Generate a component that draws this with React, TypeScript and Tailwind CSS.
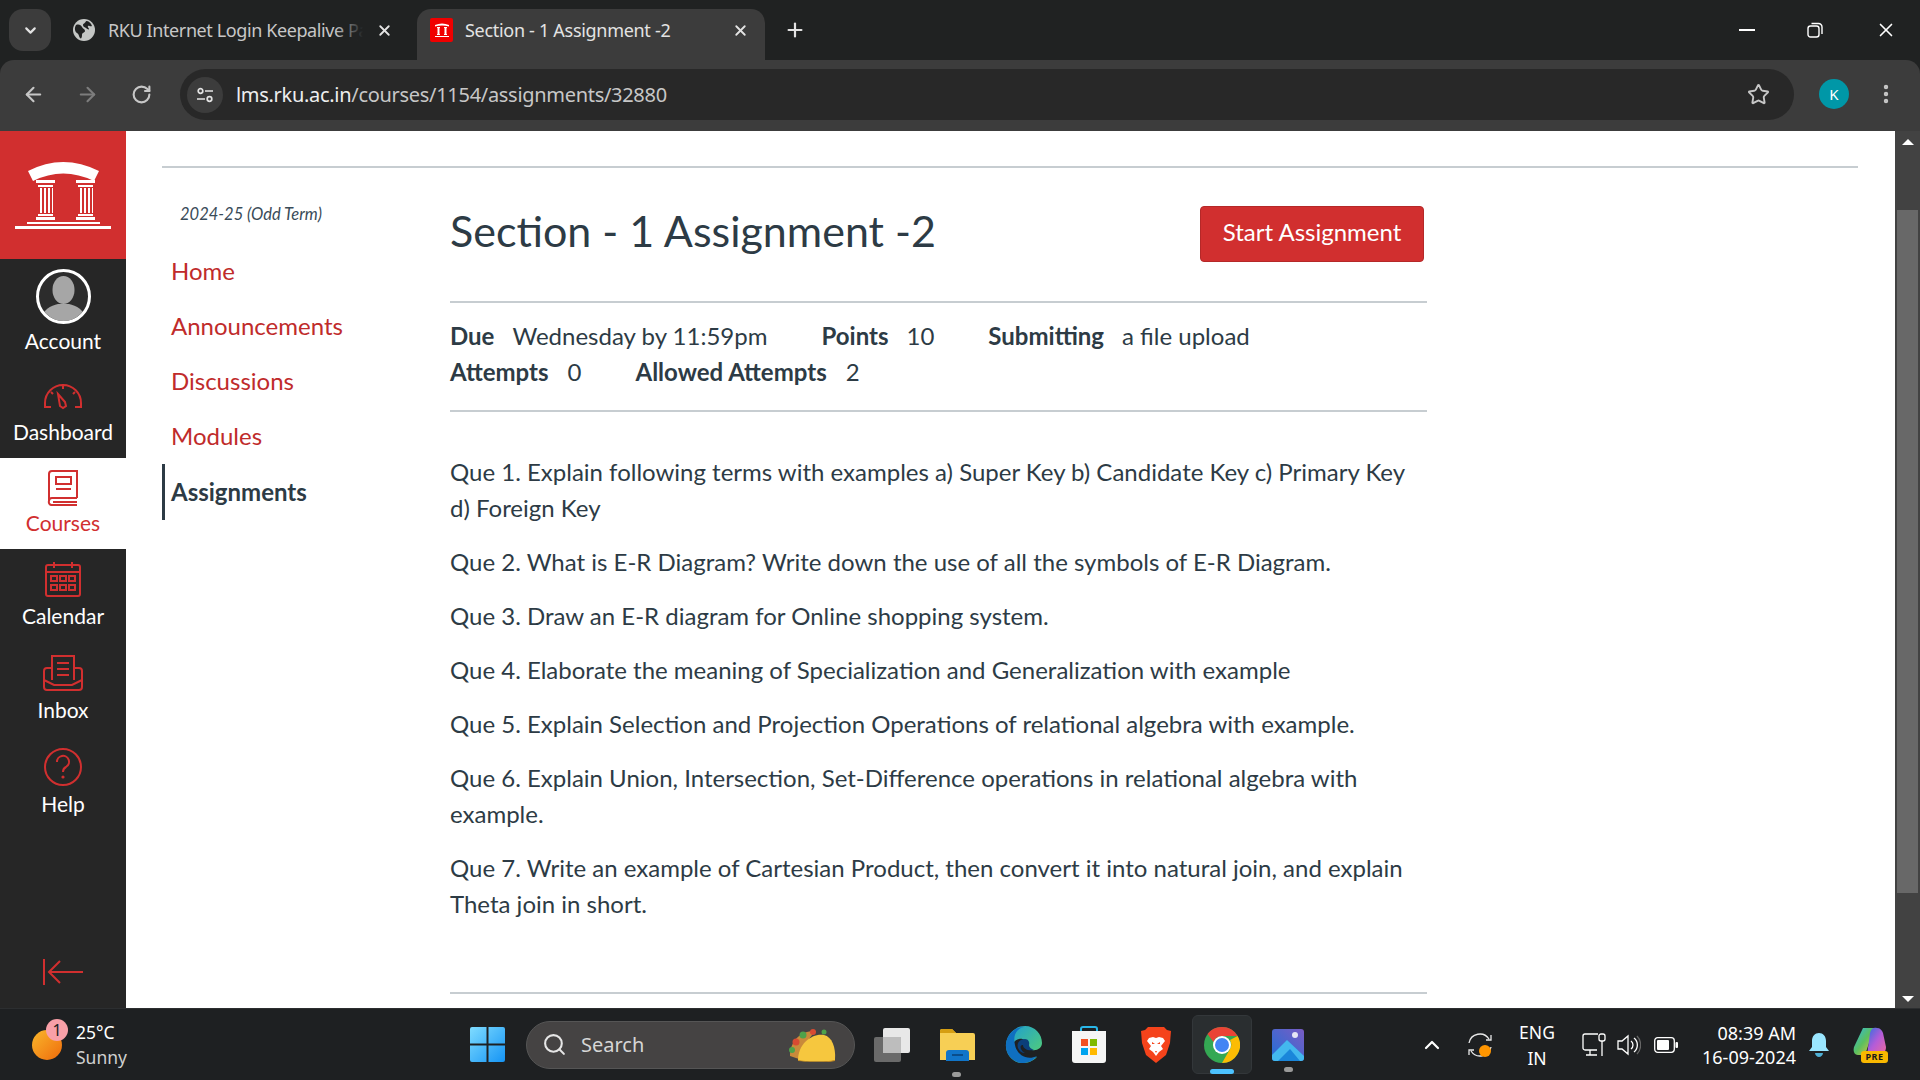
import { ArrowLeft, ArrowRight, ChevronDown, ChevronUp, EllipsisVertical, Plus, RotateCw, Search, Star, X } from "lucide-react";

const RED = "#d12f2f";

function TabStrip() {
  return (
    <div className="h-[60px] bg-[#202222] flex items-start pt-[9px] pl-[9px] text-[#e3e3e3] shrink-0">
      <div className="w-[42px] h-[42px] rounded-[14px] bg-[#3c3c3c] flex items-center justify-center">
        <ChevronDown size={17} strokeWidth={3} />
      </div>
      <div className="w-[366px] h-[42px] flex items-center pl-[22px]">
        <svg width="22" height="22" viewBox="0 0 22 22" className="shrink-0">
          <circle cx="11" cy="11" r="11" fill="#c4c7c5" />
          <path d="M3 6c3-1 5 0 6 2s3 2 3 4-3 1-3 4-1 4-2 3-1-4-3-5-3-5-1-8zM13 2c3 0 5 2 6 5-2 1-3-1-4 0s1 2 1 3-2 0-3-1-3-1-3-3 2-1 3-4z" fill="#202222" />
        </svg>
        <span className="relative ml-[13px] w-[255px] overflow-hidden whitespace-nowrap text-[18px] text-[#c7c7c7] tracking-[-0.4px]">
          RKU Internet Login Keepalive Page
          <span className="absolute inset-y-0 right-0 w-[28px] bg-gradient-to-r from-transparent to-[#202222]" />
        </span>
        <X size={17} strokeWidth={2.6} className="ml-[13px] shrink-0" />
      </div>
      <div className="w-[348px] h-[51px] bg-[#3c3c3c] rounded-t-[14px] flex items-center pl-[13px] pb-[9px]">
        <div className="w-[23px] h-[24px] bg-[#f00000] rounded-[2px] flex items-center justify-center shrink-0">
          <svg width="16" height="16" viewBox="0 0 16 16" fill="#fff">
            <path d="M1 3q7-3 14 0v1.500q-7-2-14 0zM3 5h3v1H5.500v6H6v1H3v-1h.5V6H3zM10 5h3v1h-.5v6h.5v1h-3v-1h.5V6H10zM1 14h14v1H1z" />
          </svg>
        </div>
        <span className="ml-[12px] w-[262px] whitespace-nowrap text-[18px] text-[#e3e3e3] tracking-[-0.3px]">Section - 1 Assignment -2</span>
        <X size={17} strokeWidth={2.6} className="ml-[5px] shrink-0" />
      </div>
      <Plus size={22} strokeWidth={2.4} className="ml-[19px] mt-[10px] shrink-0" />
      <div className="ml-auto flex items-center h-[42px] text-white">
        <div className="w-[16px] h-[2px] bg-white mr-[52px]" />
        <svg width="16" height="16" viewBox="0 0 16 16" fill="none" stroke="#fff" strokeWidth="1.400" className="mr-[52px]">
          <rect x="1" y="4" width="11" height="11" rx="2.500" />
          <path d="M4.500 1.500h7a3.500 3.500 0 0 1 3.500 3.500v7" />
        </svg>
        <X size={22} strokeWidth={1.8} className="mr-[23px]" />
      </div>
    </div>
  );
}

function Toolbar() {
  return (
    <div className="h-[71px] bg-[#202222] shrink-0">
      <div className="h-full bg-[#3c3c3c] rounded-t-[14px] flex items-start pt-[9px] text-[#c7c7c7]">
        <div className="w-[180px] h-[51px] flex items-center shrink-0">
          <ArrowLeft size={23} strokeWidth={2.2} className="ml-[22px]" />
          <ArrowRight size={23} strokeWidth={2.2} className="ml-[31px] text-[#7d7d7d]" />
          <RotateCw size={21} strokeWidth={2.4} className="ml-[32px]" />
        </div>
        <div className="w-[1614px] h-[51px] rounded-full bg-[#282828] flex items-center pl-[7px] shrink-0">
          <div className="w-[36px] h-[36px] rounded-full bg-[#3c3c3c] flex items-center justify-center">
            <svg width="18" height="18" viewBox="0 0 18 18" fill="none" stroke="#e3e3e3" strokeWidth="1.700">
              <circle cx="4.500" cy="5" r="2.300" />
              <path d="M9 5h8M1 13h8" />
              <circle cx="13.500" cy="13" r="2.300" />
            </svg>
          </div>
          <div className="ml-[13px] text-[20px] tracking-[-0.3px] text-[#c7c7c7] whitespace-nowrap" style={{ fontFamily: '"Noto Sans", sans-serif' }}>
            <span className="text-[#eeeeee]">lms.rku.ac.in</span>/courses/1154/assignments/32880
          </div>
          <Star size={23} strokeWidth={2} className="ml-auto mr-[24px]" />
        </div>
        <div className="w-[30px] h-[30px] ml-[25px] mt-[10px] rounded-full bg-[#0097a7] text-white text-[15px] flex items-center justify-center shrink-0">K</div>
        <EllipsisVertical size={24} strokeWidth={2.4} className="ml-[25px] mt-[13px] shrink-0" />
      </div>
    </div>
  );
}

function SideItem({ label, icon, active, h, labelClass }: { label: string; icon: React.ReactNode; active?: boolean; h: string; labelClass: string }) {
  return (
    <div className={`${h} flex flex-col items-center justify-start pt-[8px] ${active ? "bg-white text-[#d12f2f]" : "text-white"}`}>
      <div className="h-[44px] flex items-center justify-center">{icon}</div>
      <div className={`text-[21px] leading-[28px] ${labelClass}`}>{label}</div>
    </div>
  );
}

function Sidebar() {
  const s = { fill: "none", stroke: RED, strokeWidth: 2 };
  return (
    <div className="w-[126px] bg-[#262626] flex flex-col shrink-0">
      <div className="h-[128px] bg-[#d12f2f] flex items-center justify-center">
        <svg width="96" height="70" viewBox="0 0 96 70" fill="#fff">
          <path d="M13 11Q48-7 84 11l-5 10Q48 6 18 21z" />
          <path d="M21 20h19v3H21zM23 25h15v2H23zM61 20h19v3H61zM63 25h15v2H63z" />
          <path d="M25 28h2v25h-2zM29 28h2v25h-2zM33 28h2v25h-2zM37 28h1v25h-1zM65 28h2v25h-2zM69 28h2v25h-2zM73 28h2v25h-2zM77 28h1v25h-1z" />
          <path d="M23 54h15v2H23zM21 57h19v3H21zM63 54h15v2H63zM61 57h19v3H61zM12 62h73v2H12zM0 66h96v3H0z" />
        </svg>
      </div>
      <div className="h-[107px] flex flex-col items-center pt-[10px] text-white">
        <div className="w-[55px] h-[55px] rounded-full border-[3px] border-white bg-[#2c2c2c] overflow-hidden">
          <svg width="49" height="49" viewBox="0 0 49 49" fill="#a6a6a6">
            <ellipse cx="24.500" cy="18" rx="11" ry="14" />
            <path d="M2 49c1-12 10-15 17-17h11c7 2 16 5 17 17z" />
          </svg>
        </div>
        <div className="text-[21px] leading-[28px] mt-[3px]">Account</div>
      </div>
      <SideItem h="h-[92px]" labelClass="mt-0" label="Dashboard" icon={
        <svg width="40" height="28" viewBox="0 0 40 28" {...s}>
          <path d="M8 25H2v-4a18 18 0 0 1 36 0v4h-6M20 4v3M8 10l2 2M32 10l-2 2" />
          <path d="M15 12l7 8 1 4-3 2-3-2z" />
        </svg>} />
      <SideItem h="h-[91px]" labelClass="-mt-[1px]" active label="Courses" icon={
        <svg width="32" height="36" viewBox="0 0 32 36" {...s}>
          <path d="M30 28H5a3 3 0 0 0-3 3 3 3 0 0 0 3 4h25M2 31V4a3 3 0 0 1 3-3h25v27M6 32h24" />
          <rect x="9" y="7" width="15" height="7" />
          <path d="M9 19h15" />
        </svg>} />
      <SideItem h="h-[94px]" labelClass="mt-[1px]" label="Calendar" icon={
        <svg width="36" height="36" viewBox="0 0 36 36" {...s}>
          <rect x="1" y="4" width="34" height="31" rx="2" />
          <path d="M1 11h34M9 1v6M27 1v6" />
          <path d="M6 15h6v5H6zM15 15h6v5h-6zM24 15h6v5h-6zM6 24h6v5H6zM15 24h6v5h-6zM24 24h6v5h-6z" />
        </svg>} />
      <SideItem h="h-[94px]" labelClass="mt-[1px]" label="Inbox" icon={
        <svg width="40" height="36" viewBox="0 0 40 36" {...s}>
          <path d="M9 25V1h22v24M14 8h12M14 14h12M14 20h12" />
          <path d="M9 13H4a3 3 0 0 0-3 3v16a3 3 0 0 0 3 3h32a3 3 0 0 0 3-3V16a3 3 0 0 0-3-3h-5M1 25l10 5h18l10-5" />
        </svg>} />
      <SideItem h="h-[94px]" labelClass="mt-[1px]" label="Help" icon={
        <svg width="38" height="38" viewBox="0 0 38 38" {...s}>
          <circle cx="19" cy="19" r="18" />
          <path d="M13 14a6 6 0 1 1 9 5c-2 1-3 2-3 5" />
          <circle cx="19" cy="29" r="1.600" fill={RED} stroke="none" />
        </svg>} />
      <div className="mt-auto mb-[23px] flex justify-center">
        <svg width="40" height="26" viewBox="0 0 40 26" {...s}>
          <path d="M1 0v26M40 13H6M17 2L6 13l11 11" />
        </svg>
      </div>
    </div>
  );
}

function CourseNav() {
  const links = ["Home", "Announcements", "Discussions", "Modules"];
  return (
    <div className="w-[288px] shrink-0">
      <div className="pl-[18px] pt-[34px] text-[16.500px] italic leading-[24px] text-[#394b58]">2024-25 (Odd Term)</div>
      <div className="mt-[17px] text-[24px]">
        {links.map((l) => (
          <div key={l} className="h-[55px] pl-[9px] flex items-center text-[#c02b2b]">{l}</div>
        ))}
        <div className="mt-[1px] h-[56px] pl-[6px] border-l-[3px] border-[#2d3b45] flex items-center font-bold text-[#2d3b45]">Assignments</div>
      </div>
    </div>
  );
}

function Assignment() {
  return (
    <div className="w-[977px] text-[#2d3b45] text-[24px] leading-[36px]">
      <div className="h-[135px] border-b-2 border-[#c7cdd1] flex items-start">
        <h1 className="text-[43px] leading-[54px] pt-[36px]">Section - 1 Assignment -2</h1>
        <button className="ml-auto mr-[3px] mt-[38px] w-[224px] h-[56px] rounded-[4px] bg-[#d12f2f] border border-[#b52828] text-white text-[24px] leading-[50px] pb-[4px]">Start Assignment</button>
      </div>
      <div className="h-[109px] pt-[15px] border-b-2 border-[#c7cdd1]">
        <div className="flex">
          <b className="mr-[18px]">Due</b><span className="mr-[54px]">Wednesday by 11:59pm</span>
          <b className="mr-[18px]">Points</b><span className="mr-[54px]">10</span>
          <b className="mr-[18px]">Submitting</b><span>a file upload</span>
        </div>
        <div className="flex">
          <b className="mr-[19px]">Attempts</b><span className="mr-[54px]">0</span>
          <b className="mr-[19px]">Allowed Attempts</b><span>2</span>
        </div>
      </div>
      <div className="pt-[42px] flex flex-col gap-[18px] h-[582px] border-b-2 border-[#c7cdd1]">
        <p>Que 1. Explain following terms with examples a) Super Key b) Candidate Key c) Primary Key d) Foreign Key</p>
        <p>Que 2. What is E-R Diagram? Write down the use of all the symbols of E-R Diagram.</p>
        <p>Que 3. Draw an E-R diagram for Online shopping system.</p>
        <p>Que 4. Elaborate the meaning of Specialization and Generalization with example</p>
        <p>Que 5. Explain Selection and Projection Operations of relational algebra with example.</p>
        <p>Que 6. Explain Union, Intersection, Set-Difference operations in relational algebra with example.</p>
        <p>Que 7. Write an example of Cartesian Product, then convert it into natural join, and explain Theta join in short.</p>
      </div>
    </div>
  );
}

function Scrollbar() {
  return (
    <div className="w-[25px] bg-[#424242] flex flex-col items-center shrink-0">
      <div className="h-[79px] pt-[8px]">
        <div className="w-0 h-0 border-x-[6px] border-x-transparent border-b-[6px] border-b-white" />
      </div>
      <div className="w-[21px] h-[683px] bg-[#686868]" />
      <div className="mt-auto mb-[6px] w-0 h-0 border-x-[6px] border-x-transparent border-t-[6px] border-t-white" />
    </div>
  );
}

function TaskbarIcons() {
  return (
    <div className="flex items-center h-full">
      {/* task view */}
      <svg width="38" height="36" viewBox="0 0 38 36" className="ml-[18px]">
        <rect x="10" y="1" width="27" height="25" rx="2" fill="#e8e8e8" />
        <rect x="1" y="10" width="27" height="25" rx="2" fill="#6a6a6a" />
        <rect x="10" y="10" width="18" height="16" fill="#bdbdbd" />
      </svg>
      {/* explorer */}
      <div className="ml-[28px] relative">
        <svg width="37" height="34" viewBox="0 0 37 34">
          <path d="M1 3a2 2 0 0 1 2-2h10l4 4h17a2 2 0 0 1 2 2v25H1z" fill="#f7cf55" />
          <path d="M1 3a2 2 0 0 1 2-2h10l4 4H1z" fill="#d69e12" />
          <path d="M7 33V25a3 3 0 0 1 3-3h17a3 3 0 0 1 3 3v8z" fill="#1175c9" />
          <rect x="13" y="26" width="11" height="2" fill="#0a4d8a" />
        </svg>
        <div className="absolute left-[13px] top-[44px] w-[9px] h-[5px] rounded-full bg-[#9a9a9a]" />
      </div>
      {/* edge */}
      <svg width="37" height="37" viewBox="0 0 37 37" className="ml-[29px]">
        <defs>
          <linearGradient id="edgeTop" x1="0" y1="0" x2="1" y2="1">
            <stop offset="0" stopColor="#1a9bd8" />
            <stop offset="1" stopColor="#5ad46a" />
          </linearGradient>
        </defs>
        <path d="M1 18C2 8 10 0 20 0c10 0 17 8 17 17 0 5-5 8-10 7-3-1-5-2-5-5 0-4-4-7-8-6-5 1-7 5-5 10 2 6 12 12 23 8-5 5-10 6-15 6C8 37 0 28 1 18z" fill="url(#edgeTop)" />
        <path d="M1 18C2 8 10 1 19 1c-9 2-11 10-9 18 2 10 12 16 22 11-4 5-9 7-14 7C8 37 0 28 1 18z" fill="#0f6fc0" />
        <path d="M13 22c-2-6 3-9 7-9 3 0 5 3 4 6 0 2 2 4 5 5-6 1-11-1-11-5-2 0-3 1-2 4 1 2 2 3 4 4-3 0-6-2-7-5z" fill="#0b3f7a" />
      </svg>
      {/* store */}
      <svg width="36" height="37" viewBox="0 0 36 37" className="ml-[29px]">
        <path d="M10 6V3a2 2 0 0 1 2-2h12a2 2 0 0 1 2 2v3" fill="none" stroke="#29b6e8" strokeWidth="2" />
        <path d="M1 5h34v29a3 3 0 0 1-3 3H4a3 3 0 0 1-3-3z" fill="#f5f5f5" />
        <rect x="10" y="13" width="7" height="7" fill="#f25022" />
        <rect x="19" y="13" width="7" height="7" fill="#7fba00" />
        <rect x="10" y="22" width="7" height="7" fill="#00a4ef" />
        <rect x="19" y="22" width="7" height="7" fill="#ffb900" />
      </svg>
      {/* brave */}
      <svg width="30" height="36" viewBox="0 0 30 36" className="ml-[34px]">
        <path d="M7 0h16l3 3 4 1-1 12-4 12-10 8-10-8L1 16 0 4l4-1z" fill="#f5431b" />
        <path d="M8 11l4-1 3 1 3-1 4 1 2 3-4 5 2 3-4 3-3 4-3-4-4-3 2-3-4-5z" fill="#fff" />
        <path d="M11 15l3 2h-3zM19 15l-3 2h3zM14 24h2l-1 2z" fill="#f5431b" />
      </svg>
      {/* chrome */}
      <div className="ml-[21px] w-[60px] h-[59px] rounded-[6px] bg-[#2a2e30] border border-[#33373a] relative flex items-center justify-center">
        <svg width="36" height="36" viewBox="0 0 36 36">
          <circle cx="18" cy="18" r="18" fill="#34a853" />
          <path d="M18 0a18 18 0 0 1 15.600 9H18a9 9 0 0 0-8.500 6L3.500 7A18 18 0 0 1 18 0z" fill="#ea4335" />
          <path d="M33.600 9A18 18 0 0 1 18 36l7.800-13.500A9 9 0 0 0 26 13z" fill="#fbbc04" />
          <circle cx="18" cy="18" r="9" fill="#fff" />
          <circle cx="18" cy="18" r="7" fill="#4285f4" />
        </svg>
        <div className="absolute left-[17px] top-[53px] w-[24px] h-[5px] rounded-full bg-[#4cc2ff]" />
      </div>
      {/* photos */}
      <div className="ml-[20px] relative">
        <svg width="32" height="32" viewBox="0 0 32 32">
          <defs>
            <linearGradient id="phBg" x1="0" y1="1" x2="1" y2="0">
              <stop offset="0" stopColor="#1f6fd6" />
              <stop offset="1" stopColor="#7a5cc4" />
            </linearGradient>
          </defs>
          <rect width="32" height="32" rx="3" fill="url(#phBg)" />
          <circle cx="23" cy="6" r="3" fill="#e6e6f5" />
          <path d="M0 26l15-15 17 16v2a3 3 0 0 1-3 3H3a3 3 0 0 1-3-3z" fill="#43b8ee" />
          <path d="M6 32l12-12 10 12z" fill="#1a86da" />
        </svg>
        <div className="absolute left-[12px] top-[38px] w-[9px] h-[5px] rounded-full bg-[#9a9a9a]" />
      </div>
    </div>
  );
}

function Taskbar() {
  return (
    <div className="h-[72px] bg-[#1e2022] border-t border-[#2c2e30] flex items-center text-white shrink-0" style={{ fontFamily: '"Noto Sans", sans-serif' }}>
      <div className="w-[470px] flex items-center shrink-0">
        <div className="relative ml-[32px] w-[30px] h-[30px] rounded-full bg-gradient-to-br from-[#f8b62a] to-[#ee6a0a]">
          <div className="absolute left-[14px] top-[-11px] w-[22px] h-[22px] rounded-full bg-[#f9a0a8] text-[#222] text-[16px] leading-[22px] text-center">1</div>
        </div>
        <div className="ml-[14px] text-[17.500px] leading-[25px]">
          <div>25°C</div>
          <div className="text-[#d0d0d0]">Sunny</div>
        </div>
      </div>
      <svg width="35" height="35" viewBox="0 0 35 35" className="shrink-0">
        <defs>
          <linearGradient id="win" x1="0" y1="0" x2="1" y2="1">
            <stop offset="0" stopColor="#7fdcff" />
            <stop offset="1" stopColor="#1594f5" />
          </linearGradient>
        </defs>
        <path d="M0 2a2 2 0 0 1 2-2h14.500v16.500H0zM18.500 0H33a2 2 0 0 1 2 2v14.500H18.500zM0 18.500h16.500V35H2a2 2 0 0 1-2-2zM18.500 18.500H35V33a2 2 0 0 1-2 2H18.500z" fill="url(#win)" />
      </svg>
      <div className="ml-[21px] w-[329px] h-[48px] rounded-full bg-[#454343] border border-[#555] flex items-center shrink-0">
        <Search size={25} strokeWidth={2} className="ml-[15px] text-[#e6e6e6]" />
        <span className="ml-[14px] text-[20px] text-[#d6d6d6]">Search</span>
        <svg width="50" height="34" viewBox="0 0 50 34" className="ml-auto mr-[18px]">
          <path d="M4 28C4 12 16 2 30 3 24 8 16 20 16 32z" fill="#c98a3a" />
          <circle cx="10" cy="14" r="3.500" fill="#d84a32" />
          <circle cx="17" cy="7" r="3.500" fill="#4ea24a" />
          <circle cx="27" cy="4" r="3" fill="#d84a32" />
          <circle cx="6" cy="22" r="3" fill="#4ea24a" />
          <circle cx="38" cy="4" r="2.500" fill="#4ea24a" />
          <path d="M12 32C12 16 26 5 38 7c8 2 12 12 11 25-1 2-36 2-37 0z" fill="#f6c73e" />
          <path d="M12 32c14 2 26 2 37 0v1c-11 2-26 1-37 0z" fill="#c98f22" />
        </svg>
      </div>
      <TaskbarIcons />
      <div className="ml-auto flex items-center shrink-0">
        <ChevronUp size={24} strokeWidth={2.2} />
        <div className="relative ml-[23px] w-[26px] h-[26px]">
          <svg width="26" height="26" viewBox="0 0 26 26" fill="none" stroke="#e8e8e8" strokeWidth="1.300">
            <path d="M2 11a11 11 0 0 1 20-4M24 3v5h-5M24 15a11 11 0 0 1-20 4M2 23v-5h5" />
          </svg>
          <div className="absolute left-[12px] top-[13px] w-[12px] h-[12px] rounded-full bg-[#ff9500]" />
        </div>
        <div className="ml-[24px] w-[40px] text-center text-[17.500px] leading-[26px]">ENG<br />IN</div>
        <svg width="24" height="24" viewBox="0 0 24 24" fill="none" stroke="#fff" strokeWidth="1.300" className="ml-[25px]">
          <path d="M15 17H3a2 2 0 0 1-2-2V3a2 2 0 0 1 2-2h13M8 17v5M4 22h11" />
          <rect x="17" y="1" width="6" height="7" rx="2" />
          <path d="M20 8v15" />
        </svg>
        <svg width="24" height="22" viewBox="0 0 24 22" fill="none" stroke="#fff" strokeWidth="1.300" className="ml-[11px]">
          <path d="M1 7h4l6-5v18l-6-5H1zM14 7a5 5 0 0 1 0 8M17 4a9 9 0 0 1 0 14" />
          <path d="M20 2a13 13 0 0 1 0 18" stroke="#666" />
        </svg>
        <svg width="24" height="16" viewBox="0 0 24 16" className="ml-[13px]">
          <rect x="0.700" y="0.700" width="19.600" height="14.600" rx="3" fill="none" stroke="#fff" strokeWidth="1.300" />
          <rect x="3" y="3" width="12" height="10" rx="1" fill="#fff" />
          <rect x="21.500" y="5" width="2.500" height="6" rx="1" fill="#fff" />
        </svg>
        <div className="ml-[11px] w-[107px] text-right text-[18px] leading-[24px]">08:39 AM<br />16-09-2024</div>
        <svg width="20" height="24" viewBox="0 0 20 24" fill="#9ae6ff" className="ml-[13px]">
          <path d="M10 0c4 0 7 3 7 8v6l3 4H0l3-4V8c0-5 3-8 7-8z" />
          <path d="M6 20h8c0 2-2 4-4 4s-4-2-4-4z" fill="#4fb0d6" />
        </svg>
        <div className="relative ml-[24px] mr-[31px] w-[36px] h-[36px]">
          <svg width="34" height="30" viewBox="0 0 34 30">
            <defs>
              <linearGradient id="cpA" x1="0" y1="0" x2="1" y2="1">
                <stop offset="0" stopColor="#2fb7e8" />
                <stop offset="0.500" stopColor="#5bc05e" />
                <stop offset="1" stopColor="#f2c13c" />
              </linearGradient>
              <linearGradient id="cpB" x1="0" y1="0" x2="1" y2="1">
                <stop offset="0" stopColor="#2d6fe0" />
                <stop offset="0.500" stopColor="#b45cd8" />
                <stop offset="1" stopColor="#f06a9a" />
              </linearGradient>
            </defs>
            <path d="M10 1h11L12 28H5C1 28 0 24 1 20z" fill="url(#cpA)" />
            <path d="M17 6c1-4 3-6 7-5 3 0 5 2 6 5l3 14c0 5-3 8-7 8H14z" fill="url(#cpB)" />
          </svg>
          <div className="absolute left-[8px] top-[24px] w-[27px] h-[12px] rounded-[3px] bg-[#f9b800] text-[#1a1a1a] text-[9px] font-bold leading-[12px] text-center tracking-[0.5px]">PRE</div>
        </div>
      </div>
    </div>
  );
}

export default function App() {
  return (
    <div className="w-[1920px] h-[1080px] flex flex-col overflow-hidden bg-[#202222]" style={{ fontFamily: '"Noto Sans", sans-serif' }}>
      <TabStrip />
      <Toolbar />
      <div className="h-[877px] flex shrink-0" style={{ fontFamily: 'Lato, sans-serif' }}>
        <Sidebar />
        <div className="flex-1 bg-white pl-[36px] pr-[37px] pt-[35px] overflow-hidden">
          <div className="border-t-2 border-[#c7cdd1] flex">
            <CourseNav />
            <Assignment />
          </div>
        </div>
        <Scrollbar />
      </div>
      <Taskbar />
    </div>
  );
}
